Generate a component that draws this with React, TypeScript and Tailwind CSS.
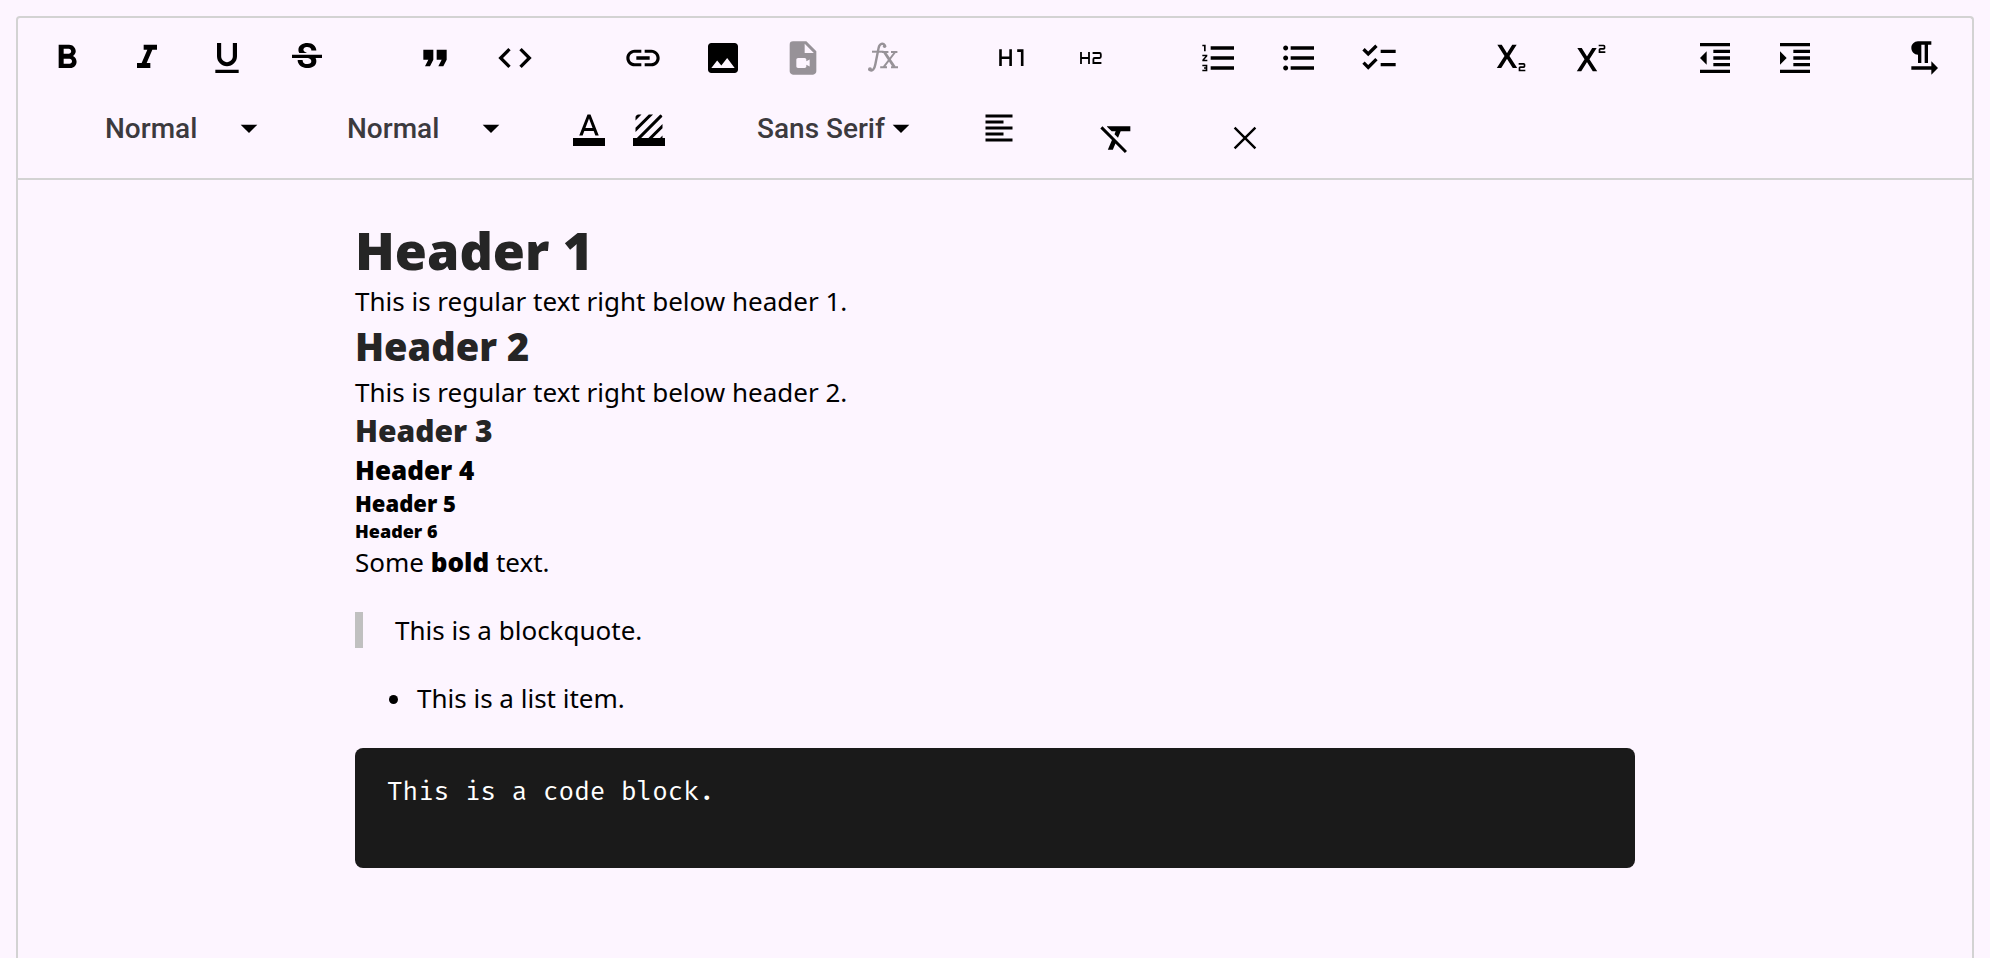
import type { ReactNode } from 'react';
import {
  MdArrowDropDown,
  MdChecklist,
  MdCode,
  MdFormatAlignLeft,
  MdFormatBold,
  MdFormatClear,
  MdFormatIndentDecrease,
  MdFormatIndentIncrease,
  MdFormatItalic,
  MdFormatListBulleted,
  MdFormatListNumbered,
  MdFormatQuote,
  MdFormatTextdirectionLToR,
  MdFormatUnderlined,
  MdImage,
  MdLink,
  MdStrikethroughS,
  MdSubscript,
  MdSuperscript,
  MdVideoFile,
} from 'react-icons/md';

function Tool({ label, disabled, children }: { label: string; disabled?: boolean; children: ReactNode }) {
  return (
    <button
      type="button"
      aria-label={label}
      disabled={disabled}
      className="flex h-20 w-20 items-center justify-center text-[40px] text-black disabled:opacity-40"
    >
      {children}
    </button>
  );
}

function SmallTool({ label, children }: { label: string; children: ReactNode }) {
  return (
    <button
      type="button"
      aria-label={label}
      className="flex h-[60px] w-[60px] items-center justify-center text-[36px] text-black"
    >
      {children}
    </button>
  );
}

function Group({ children }: { children: ReactNode }) {
  return <div className="flex">{children}</div>;
}

function Picker({ label, options }: { label: string; options: string[] }) {
  return (
    <div className="relative flex h-[60px] w-[194px] items-center pl-[30px]">
      <select
        aria-label={label}
        className="h-full w-full appearance-none bg-transparent pt-0.5 font-['Roboto',sans-serif] text-[28px] font-medium text-[#3c3a3e]"
      >
        {options.map((option) => (
          <option key={option}>{option}</option>
        ))}
      </select>
      <MdArrowDropDown className="pointer-events-none absolute right-0 size-10 text-black" />
    </div>
  );
}

function Heading1Icon() {
  return (
    <svg viewBox="0 0 40 40" className="size-10" fill="none" stroke="currentColor" strokeWidth="2.6">
      <path d="M9.5 11.3v16.8M19.6 11.3v16.8M9.5 19.7h10.1M26.2 12.6h5v15.5" />
    </svg>
  );
}

function Heading2Icon() {
  return (
    <svg viewBox="0 0 40 40" className="size-10" fill="none" stroke="currentColor" strokeWidth="1.8">
      <path d="M10 14v12M18 14v12M10 20h8M21.6 15h7q1.2 0 1.2 1.2v2.6q0 1.2-1.2 1.2h-5q-1.2 0-1.2 1.2V25h8" />
    </svg>
  );
}

function FormulaIcon() {
  return (
    <svg viewBox="0 0 40 40" className="size-10" fill="none" stroke="currentColor" strokeLinecap="round">
      <path strokeWidth="2.4" d="M22 7.6C20 4.6 16.6 5.4 15.6 10l-3.3 16.5C11.5 31 9.4 33.6 7 31.9" />
      <circle cx="21.6" cy="8.2" r="1.7" fill="currentColor" stroke="none" />
      <circle cx="7" cy="31.2" r="2" fill="currentColor" stroke="none" />
      <path strokeWidth="2" strokeLinecap="butt" d="M9 13.7h11.5" />
      <path strokeWidth="2.8" strokeLinecap="butt" d="M21.6 14.5l9.8 14.6" />
      <path strokeWidth="2" strokeLinecap="butt" d="M31.8 14.5L20.6 29.1M19 14h6.4M28 14h6.4M17.2 29.2H24M28 29.2h7" />
    </svg>
  );
}

function TextColorIcon() {
  return (
    <svg viewBox="0 0 36 36" className="size-9" fill="currentColor">
      <path transform="scale(1.5)" d="M11 3 5.5 17h2.25l1.12-3h6.25l1.12 3h2.25L13 3h-2zm-1.38 9L12 5.67 14.38 12H9.62z" />
      <path d="M2 28h32v8H2z" />
    </svg>
  );
}

function HighlightIcon() {
  return (
    <svg viewBox="0 0 36 36" className="size-9" fill="currentColor">
      <path
        transform="scale(1.5)"
        d="M19.51 3.08 3.08 19.51c.09.34.27.65.51.9.25.24.56.42.9.51L20.93 4.49c-.19-.69-.73-1.23-1.42-1.41zM11.88 3 3 11.88v2.83L14.71 3h-2.83zM5 3c-1.1 0-2 .9-2 2v2l4-4H5zm14 18c.55 0 1.05-.22 1.41-.59.37-.36.59-.86.59-1.41v-2l-4 4h2zm-9.71 0h2.83L21 12.12V9.29L9.29 21z"
      />
      <path d="M2 28h32v8H2z" />
    </svg>
  );
}

function CloseIcon() {
  return (
    <svg viewBox="0 0 40 40" className="size-10" fill="none" stroke="currentColor" strokeWidth="2.4">
      <path d="M9.6 9.6l20.8 20.8M30.4 9.6L9.6 30.4" />
    </svg>
  );
}

function Toolbar() {
  return (
    <div role="toolbar" aria-label="Formatting" className="border-b-2 border-[#d3d3d3] px-[9px]">
      <div className="flex flex-wrap gap-x-12">
        <Group>
          <Tool label="Bold"><MdFormatBold /></Tool>
          <Tool label="Italic"><MdFormatItalic /></Tool>
          <Tool label="Underline"><MdFormatUnderlined /></Tool>
          <Tool label="Strikethrough"><MdStrikethroughS /></Tool>
        </Group>
        <Group>
          <Tool label="Blockquote"><MdFormatQuote /></Tool>
          <Tool label="Code block"><MdCode /></Tool>
        </Group>
        <Group>
          <Tool label="Link"><MdLink /></Tool>
          <Tool label="Image"><MdImage /></Tool>
          <Tool label="Video" disabled><MdVideoFile /></Tool>
          <Tool label="Formula" disabled><FormulaIcon /></Tool>
        </Group>
        <Group>
          <Tool label="Heading 1"><Heading1Icon /></Tool>
          <Tool label="Heading 2"><Heading2Icon /></Tool>
        </Group>
        <Group>
          <Tool label="Numbered list"><MdFormatListNumbered /></Tool>
          <Tool label="Bulleted list"><MdFormatListBulleted /></Tool>
          <Tool label="Checklist"><MdChecklist /></Tool>
        </Group>
        <Group>
          <Tool label="Subscript"><MdSubscript /></Tool>
          <Tool label="Superscript"><MdSuperscript /></Tool>
        </Group>
        <Group>
          <Tool label="Decrease indent"><MdFormatIndentDecrease /></Tool>
          <Tool label="Increase indent"><MdFormatIndentIncrease /></Tool>
        </Group>
        <Group>
          <Tool label="Text direction"><MdFormatTextdirectionLToR /></Tool>
        </Group>
      </div>
      <div className="flex flex-wrap items-start gap-x-12 pl-12">
        <Picker label="Size" options={['Normal', 'Small', 'Large', 'Huge']} />
        <Picker label="Heading" options={['Normal', 'Heading 1', 'Heading 2', 'Heading 3']} />
        <Group>
          <SmallTool label="Text color"><TextColorIcon /></SmallTool>
          <SmallTool label="Highlight color"><HighlightIcon /></SmallTool>
        </Group>
        <Picker label="Font" options={['Sans Serif', 'Serif', 'Monospace']} />
        <SmallTool label="Align left"><MdFormatAlignLeft /></SmallTool>
        <Tool label="Clear formatting"><MdFormatClear /></Tool>
        <Tool label="Close"><CloseIcon /></Tool>
      </div>
    </div>
  );
}

export default function App() {
  return (
    <main className="flex h-screen flex-col overflow-hidden bg-[#fdf5ff] px-4 pt-4 font-['Open_Sans',sans-serif] text-black">
      <section className="flex-1 rounded-t border-2 border-b-0 border-[#d3d3d3]">
        <Toolbar />
        <article className="mx-auto max-w-[1280px] pt-9 font-['Noto_Sans',sans-serif] text-[26px] leading-9">
          <h1 className="font-['Open_Sans',sans-serif] text-[52px] leading-[67px] font-extrabold text-[#252525]">Header 1</h1>
          <p>This is regular text right below header 1.</p>
          <h2 className="font-['Open_Sans',sans-serif] text-[38px] leading-[55px] font-extrabold text-[#252525]">Header 2</h2>
          <p>This is regular text right below header 2.</p>
          <h3 className="font-['Open_Sans',sans-serif] text-[30px] leading-[42px] font-extrabold text-[#252525]">Header 3</h3>
          <h4 className="font-['Open_Sans',sans-serif] text-[26px] leading-[36px] font-extrabold">Header 4</h4>
          <h5 className="font-['Open_Sans',sans-serif] text-[22px] leading-[30px] font-extrabold">Header 5</h5>
          <h6 className="font-['Open_Sans',sans-serif] text-[18px] leading-[26px] font-extrabold">Header 6</h6>
          <p>
            Some <strong className="font-['Open_Sans',sans-serif] font-extrabold">bold</strong> text.
          </p>
          <blockquote className="mt-8 border-l-8 border-[#c0c0c0] pl-8">This is a blockquote.</blockquote>
          <ul className="mt-8 list-disc pl-[59px]">
            <li className="pl-[3px]">This is a list item.</li>
          </ul>
          <pre className="mt-8 h-[120px] rounded-lg bg-[#1a1a1a] px-8 py-[26px] font-['Fira_Mono','Noto_Sans_Mono','Liberation_Mono',monospace] text-[26px] leading-9 text-white">
            <code className="font-[inherit]">This is a code block.</code>
          </pre>
        </article>
      </section>
    </main>
  );
}
